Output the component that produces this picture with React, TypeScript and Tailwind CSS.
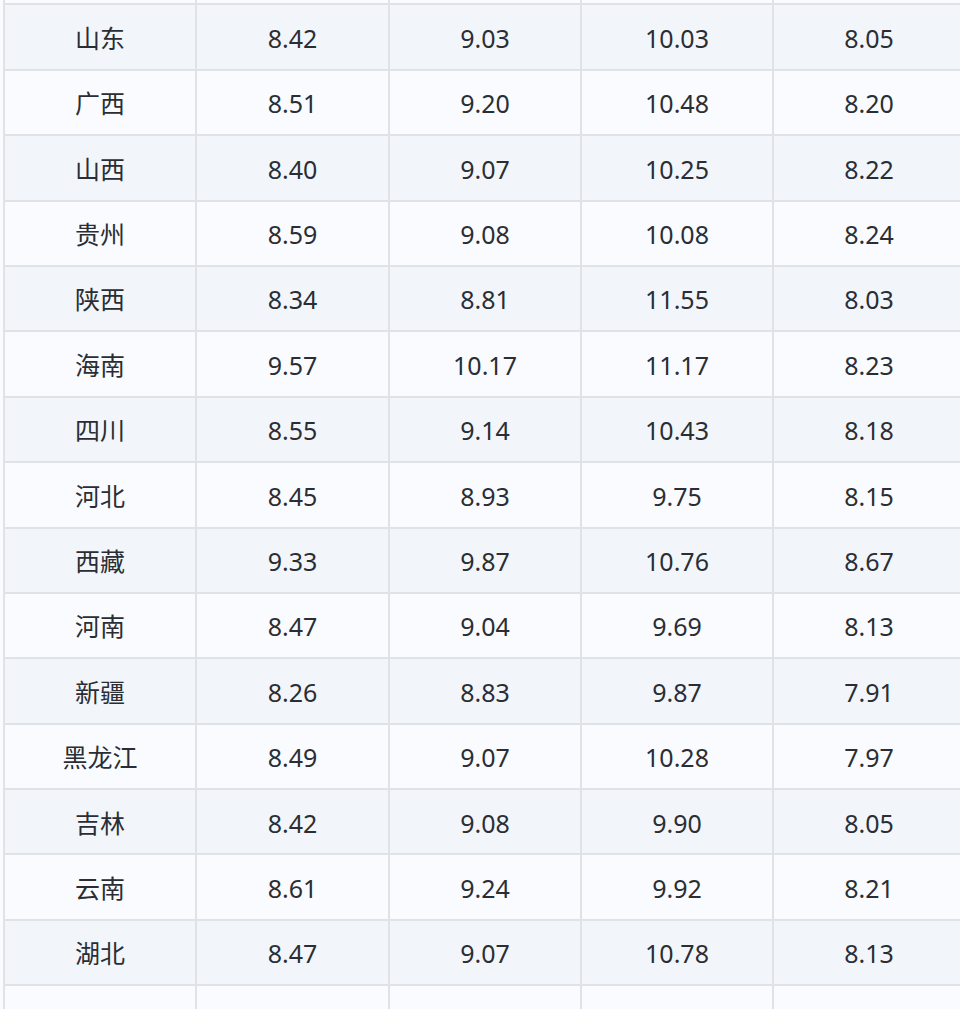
import React from "react";

const rows: [string, string, string, string, string][] = [
  ["山东", "8.42", "9.03", "10.03", "8.05"],
  ["广西", "8.51", "9.20", "10.48", "8.20"],
  ["山西", "8.40", "9.07", "10.25", "8.22"],
  ["贵州", "8.59", "9.08", "10.08", "8.24"],
  ["陕西", "8.34", "8.81", "11.55", "8.03"],
  ["海南", "9.57", "10.17", "11.17", "8.23"],
  ["四川", "8.55", "9.14", "10.43", "8.18"],
  ["河北", "8.45", "8.93", "9.75", "8.15"],
  ["西藏", "9.33", "9.87", "10.76", "8.67"],
  ["河南", "8.47", "9.04", "9.69", "8.13"],
  ["新疆", "8.26", "8.83", "9.87", "7.91"],
  ["黑龙江", "8.49", "9.07", "10.28", "7.97"],
  ["吉林", "8.42", "9.08", "9.90", "8.05"],
  ["云南", "8.61", "9.24", "9.92", "8.21"],
  ["湖北", "8.47", "9.07", "10.78", "8.13"],
];

function Row({ cells, tinted, h }: { cells: string[]; tinted: boolean; h: string }) {
  return (
    <div
      className={`grid grid-cols-[192px_193px_192px_192px_192px] border-t-2 border-[#dfe3e8] ${
        tinted ? "bg-[#f2f6fb]" : "bg-[#f9fbfe]"
      } ${h}`}
    >
      {cells.map((c, i) => (
        <div
          key={i}
          className="flex items-center justify-center border-l-2 border-[#dfe3e8] pt-[3px] text-[25px] text-[#2a2e34] overflow-hidden"
        >
          {c}
        </div>
      ))}
    </div>
  );
}

export default function App() {
  return (
    <div
      className="w-[960px] h-[1009px] overflow-hidden bg-[#f9fbfe] pl-[3px]"
      style={{ fontFamily: '"Noto Sans", "Noto Sans CJK SC", sans-serif' }}
    >
      <div className="w-[963px] -mt-[62px]">
        <Row cells={["", "", "", "", ""]} tinted={false} h="h-[65.4px]" />
        {rows.map((r, i) => (
          <Row key={i} cells={r} tinted={i % 2 === 0} h="h-[65.4px]" />
        ))}
        <Row cells={["", "", "", "", ""]} tinted={false} h="h-[65.4px]" />
      </div>
    </div>
  );
}
